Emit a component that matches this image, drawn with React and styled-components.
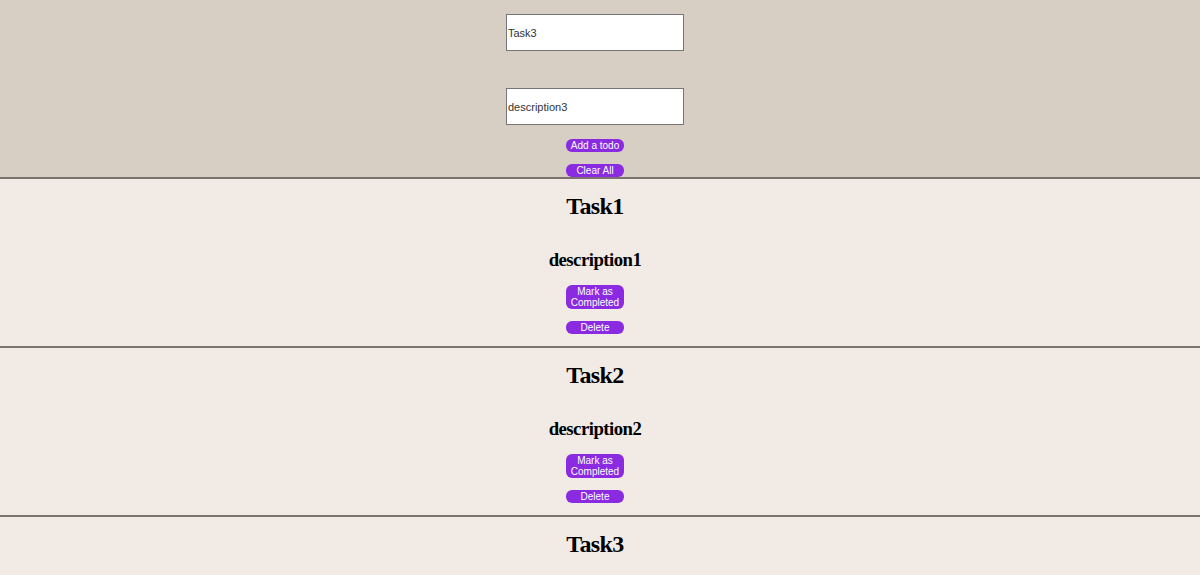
import React, { useState } from "react";
import styled, { createGlobalStyle } from "styled-components";

const GlobalStyle = createGlobalStyle`
  body {
    margin: 0;
    background: #f2ebe5;
    font-family: "Liberation Serif", "Times New Roman", serif;
  }
`;

const Header = styled.div`
  background: #d7cfc4;
  padding: 14px 10px 0 0;
  display: flex;
  flex-direction: column;
  align-items: center;
`;

const Input = styled.input`
  box-sizing: border-box;
  width: 178px;
  height: 37px;
  margin-bottom: ${(p) => (p.$last ? "0" : "37px")};
  padding: 0 1px;
  border: 1px solid #767676;
  background: #fff;
  color: #333;
  font-family: "Liberation Sans", Arial, sans-serif;
  font-size: 11px;
  outline: none;
`;

const Button = styled.button`
  width: 58px;
  margin-top: ${(p) => p.$gap || 0}px;
  padding: 1px 0;
  border: none;
  border-radius: 6px;
  background: #8a2be2;
  color: #fff;
  font-family: "Liberation Sans", Arial, sans-serif;
  font-size: 10px;
  line-height: 11px;
  cursor: pointer;
`;

const Item = styled.div`
  border-top: 2px solid #7b726d;
  background: #f2ebe5;
  padding: 13px 10px 12px 0;
  display: flex;
  flex-direction: column;
  align-items: center;
`;

const Title = styled.h2`
  margin: 0;
  font-size: 24px;
  line-height: 28px;
  font-weight: 700;
  letter-spacing: -0.6px;
  color: #000;
`;

const Desc = styled.h3`
  margin: 29px 0 0;
  font-size: 18.72px;
  line-height: 22px;
  font-weight: 700;
  letter-spacing: -0.5px;
  color: #000;
`;

const initialTodos = [
  { title: "Task1", desc: "description1" },
  { title: "Task2", desc: "description2" },
  { title: "Task3", desc: "description3" },
];

const App = () => {
  const [title, setTitle] = useState("Task3");
  const [desc, setDesc] = useState("description3");
  const [todos, setTodos] = useState(initialTodos);

  const addTodo = () => setTodos([...todos, { title, desc }]);

  return (
    <>
      <GlobalStyle />
      <Header>
        <Input value={title} onChange={(e) => setTitle(e.target.value)} />
        <Input $last value={desc} onChange={(e) => setDesc(e.target.value)} />
        <Button $gap={14} onClick={addTodo}>
          Add a todo
        </Button>
        <Button $gap={12} onClick={() => setTodos([])}>
          Clear All
        </Button>
      </Header>
      {todos.map((todo, i) => (
        <Item key={i}>
          <Title>{todo.title}</Title>
          <Desc>{todo.desc}</Desc>
          <Button $gap={14}>
            Mark as
            <br />
            Completed
          </Button>
          <Button
            $gap={12}
            onClick={() => setTodos(todos.filter((_, j) => j !== i))}
          >
            Delete
          </Button>
        </Item>
      ))}
    </>
  );
};

export default App;
